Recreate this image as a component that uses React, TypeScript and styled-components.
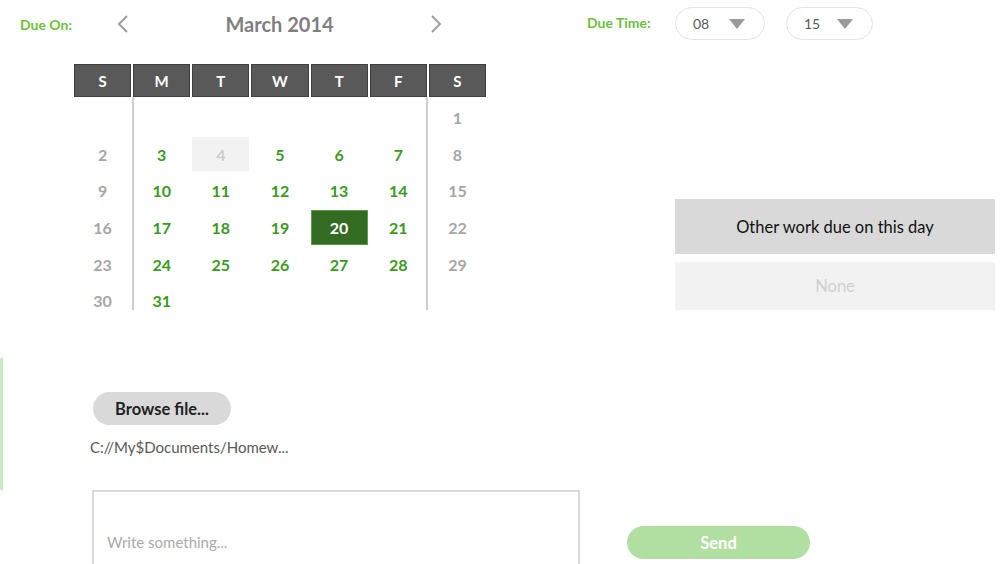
import styled, { createGlobalStyle } from "styled-components";

const GlobalStyle = createGlobalStyle`
  html, body {
    margin: 0;
    padding: 0;
    background: #ffffff;
  }
  body {
    font-family: Lato, "Open Sans", "Liberation Sans", sans-serif;
    overflow: hidden;
  }
`;

const WEEKDAYS = ["S", "M", "T", "W", "T", "F", "S"];

// march 2014 starts on a saturday
const DAYS: (number | null)[] = [
  null, null, null, null, null, null,
  ...Array.from({ length: 31 }, (_, i) => i + 1),
];

const DISABLED = 4;
const SELECTED = 20;

export default function App() {
  return (
    <Page>
      <GlobalStyle />
      <LeftColumn>
        <TopRow>
          <Label>Due On:</Label>
          <MonthNav>
            <Chevron dir="left" />
            <MonthTitle>March 2014</MonthTitle>
            <Chevron dir="right" />
          </MonthNav>
        </TopRow>

        <Calendar>
          <HeaderRow>
            {WEEKDAYS.map((d, i) => (
              <HeaderCell key={i}>{d}</HeaderCell>
            ))}
          </HeaderRow>
          <Body>
            {DAYS.map((day, i) => {
              const weekend = i % 7 === 0 || i % 7 === 6;
              let kind: keyof typeof dayColors = "work";
              if (day === null) kind = "empty";
              else if (day === DISABLED) kind = "disabled";
              else if (day === SELECTED) kind = "selected";
              else if (weekend) kind = "weekend";
              return (
                <DayCell key={i} $kind={kind}>
                  {day ?? ""}
                </DayCell>
              );
            })}
          </Body>
        </Calendar>

        <Attachment>
          <BrowseButton>Browse file...</BrowseButton>
          <FilePath>C://My$Documents/Homew...</FilePath>
        </Attachment>

        <MessageBox>
          <Placeholder>Write something...</Placeholder>
        </MessageBox>
      </LeftColumn>

      <RightColumn>
        <TimeRow>
          <Label>Due Time:</Label>
          <TimeSelect>
            <span>08</span>
            <Caret />
          </TimeSelect>
          <TimeSelect>
            <span>15</span>
            <Caret />
          </TimeSelect>
        </TimeRow>

        <OtherWork>
          <OtherHeader>Other work due on this day</OtherHeader>
          <OtherEmpty>None</OtherEmpty>
        </OtherWork>

        <SendButton>Send</SendButton>
      </RightColumn>
    </Page>
  );
}

function Chevron({ dir }: { dir: "left" | "right" }) {
  return (
    <svg width="12" height="20" viewBox="0 0 12 20">
      <path
        d={dir === "left" ? "M10 2 L2 10 L10 18" : "M2 2 L10 10 L2 18"}
        fill="none"
        stroke="#9a9a9a"
        strokeWidth="1.8"
      />
    </svg>
  );
}

const Page = styled.div`
  width: 1000px;
  height: 564px;
  display: flex;
  overflow: hidden;
`;

const LeftColumn = styled.div`
  width: 587px;
  display: flex;
  flex-direction: column;

  & > * {
    flex-shrink: 0;
  }
`;

const TopRow = styled.div`
  height: 48px;
  display: flex;
  align-items: center;
  padding-left: 20px;
`;

const Label = styled.div`
  color: #6cbf3c;
  font-weight: 700;
  font-size: 14px;
  white-space: nowrap;
`;

const MonthNav = styled.div`
  width: 325px;
  margin-left: 45px;
  display: flex;
  align-items: center;
  justify-content: space-between;
`;

const MonthTitle = styled.div`
  color: #7f7f7f;
  font-weight: 700;
  font-size: 20px;
`;

const Calendar = styled.div`
  width: 412px;
  margin-left: 74px;
  margin-top: 16px;
`;

const HeaderRow = styled.div`
  display: grid;
  grid-template-columns: repeat(7, 1fr);
  gap: 2px;
  height: 33px;
`;

const HeaderCell = styled.div`
  background: #595959;
  border: 1px solid #3f3f3f;
  color: #ffffff;
  font-weight: 700;
  font-size: 15px;
  display: flex;
  align-items: center;
  justify-content: center;
`;

const Body = styled.div`
  height: 213px;
  padding-top: 3px;
  box-sizing: border-box;
  display: grid;
  grid-template-columns: repeat(7, 1fr);
  grid-auto-rows: 34.7px;
  gap: 2px;
  background:
    linear-gradient(#d0d0d0, #d0d0d0) 58px 0 / 2px 100% no-repeat,
    linear-gradient(#d0d0d0, #d0d0d0) 352px 0 / 2px 100% no-repeat;
`;

const dayColors = {
  weekend: { color: "#a6a6a6", bg: "transparent", border: "transparent" },
  work: { color: "#3a9a1e", bg: "transparent", border: "transparent" },
  disabled: { color: "#cccccc", bg: "#f2f2f2", border: "#f2f2f2" },
  selected: { color: "#ffffff", bg: "#346b22", border: "#5f9a4c" },
  empty: { color: "transparent", bg: "transparent", border: "transparent" },
};

const DayCell = styled.div<{ $kind: keyof typeof dayColors }>`
  display: flex;
  align-items: center;
  justify-content: center;
  font-weight: 700;
  font-size: 16px;
  color: ${(p) => dayColors[p.$kind].color};
  background: ${(p) => dayColors[p.$kind].bg};
  border: 1px solid ${(p) => dayColors[p.$kind].border};
`;

const Attachment = styled.div`
  margin-top: 48px;
  height: 132px;
  box-sizing: border-box;
  border-left: 3px solid #cbeac2;
  padding-top: 34px;
  display: flex;
  flex-direction: column;
  align-items: flex-start;
`;

const BrowseButton = styled.button`
  margin-left: 90px;
  width: 138px;
  height: 33px;
  border: none;
  border-radius: 17px;
  background: #d9d9d9;
  color: #222222;
  font-family: inherit;
  font-weight: 700;
  font-size: 16.5px;
  padding: 0;
`;

const FilePath = styled.div`
  margin-left: 87px;
  margin-top: 13px;
  color: #595959;
  font-size: 15px;
`;

const MessageBox = styled.div`
  margin-left: 92px;
  width: 488px;
  height: 90px;
  box-sizing: border-box;
  border: 2px solid #d9d9d9;
  padding: 41px 0 0 13px;
`;

const Placeholder = styled.div`
  color: #aaaaaa;
  font-size: 15px;
`;

const RightColumn = styled.div`
  flex: 1;
  display: flex;
  flex-direction: column;
  align-items: flex-start;
  padding-top: 7px;
`;

const TimeRow = styled.div`
  height: 33px;
  display: grid;
  grid-template-columns: 67px 90px 87px;
  align-items: center;
  column-gap: 21px;

  & > ${Label} {
    margin-top: -3px;
  }
`;

const TimeSelect = styled.div`
  height: 33px;
  box-sizing: border-box;
  border: 1px solid #e3e3e3;
  border-radius: 17px;
  display: flex;
  align-items: center;
  justify-content: space-between;
  padding: 0 19px 0 17px;
  color: #595959;
  font-size: 14px;
`;

const Caret = styled.div`
  width: 0;
  height: 0;
  border-left: 8px solid transparent;
  border-right: 8px solid transparent;
  border-top: 10px solid #9a9a9a;
`;

const OtherWork = styled.div`
  margin-top: 159px;
  margin-left: 88px;
  width: 320px;
  display: flex;
  flex-direction: column;
  gap: 8px;
`;

const OtherHeader = styled.div`
  height: 55px;
  background: #d9d9d9;
  color: #111111;
  font-size: 16.5px;
  display: flex;
  align-items: center;
  justify-content: center;
`;

const OtherEmpty = styled.div`
  height: 48px;
  background: #f2f2f2;
  color: #cfcfcf;
  font-size: 16.5px;
  display: flex;
  align-items: center;
  justify-content: center;
`;

const SendButton = styled.button`
  margin-top: 216px;
  margin-left: 40px;
  width: 183px;
  height: 33px;
  border: none;
  border-radius: 17px;
  background: #b1dfa2;
  color: #ffffff;
  font-family: inherit;
  font-weight: 700;
  font-size: 16.5px;
  padding: 0;
`;
